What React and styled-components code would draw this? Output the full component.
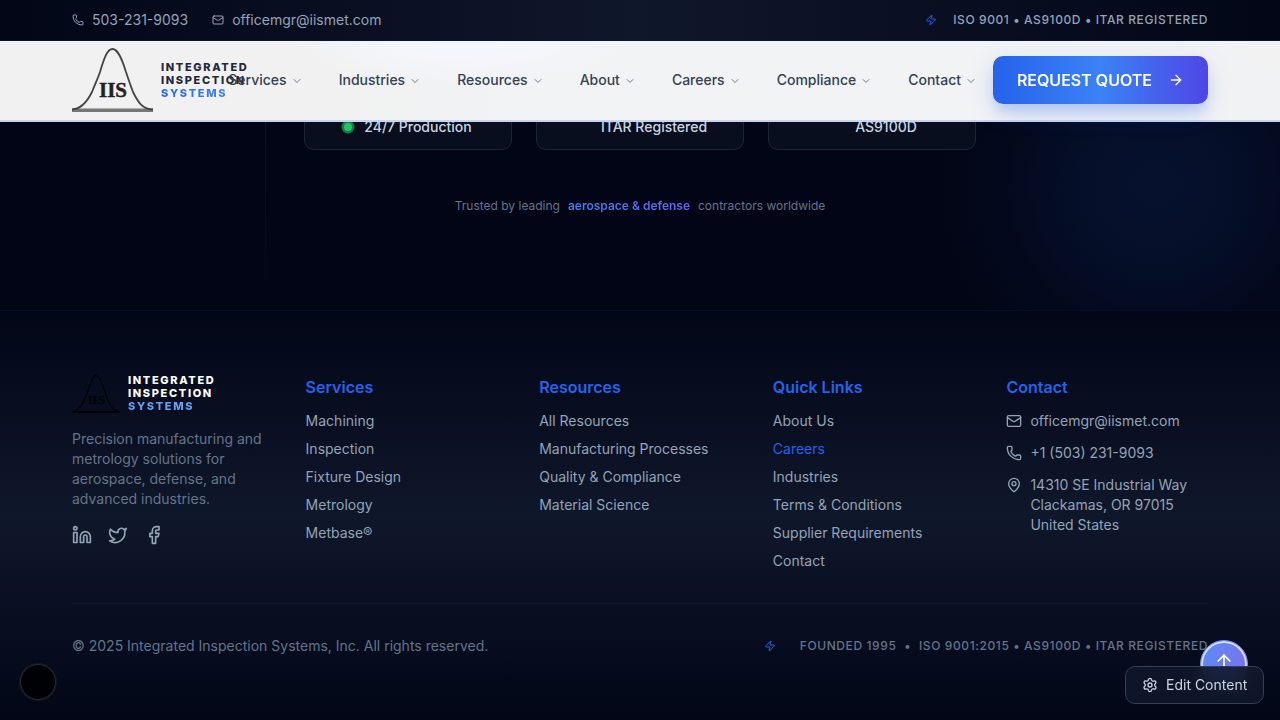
import React from "react";
import styled, { createGlobalStyle } from "styled-components";
import {
  Phone, Mail, Zap, ChevronDown, ArrowRight, ArrowUp,
  Linkedin, Twitter, Facebook, MapPin, Settings,
} from "lucide-react";

const GlobalStyle = createGlobalStyle`
  *, *::before, *::after { box-sizing: border-box; }
  body {
    margin: 0;
    background: #020515;
    font-family: Inter, "Liberation Sans", sans-serif;
    font-size: 14px;
    line-height: 20px;
    overflow: hidden;
  }
  svg { flex: none; display: block; }
`;

const Page = styled.div`
  position: relative;
  width: 1280px;
  height: 720px;
  overflow: hidden;
  background: #020515;
`;

const Container = styled.div`
  width: 1136px;
  margin: 0 auto;
`;

/* Sticky header */
const Header = styled.header`
  position: fixed;
  top: 0;
  left: 0;
  width: 1280px;
  z-index: 10;
`;

const TopBar = styled.div`
  height: 41px;
  border-bottom: 1px solid #071634;
  background: linear-gradient(90deg, #020617, #0f172a 50%, #020617);
`;

const TopRow = styled(Container)`
  display: flex;
  height: 40px;
  align-items: center;
  justify-content: space-between;
  color: #94a3b8;
`;

const Inline = styled.div`
  display: flex;
  align-items: center;
  gap: ${(p) => p.$gap}px;
`;

const Caps = styled.span`
  font-size: 12px;
  font-weight: ${(p) => p.$weight || 500};
  letter-spacing: 0.05em;
  line-height: 16px;
  white-space: nowrap;
`;

const NavBar = styled.div`
  height: 81px;
  border-bottom: 2px solid #c8d5f0;
  background:
    radial-gradient(ellipse 170px 44px at 465px 0, #f4f8ff, rgba(244, 247, 253, 0.6) 55%, rgba(244, 247, 253, 0)),
    radial-gradient(ellipse 240px 90px at 1150px 80px, #f1f3f6, rgba(241, 243, 246, 0)),
    linear-gradient(90deg, #f1f1f1 0 25%, #f1f3f4 40% 85%, #f2f2f2);
`;

const NavRow = styled(Container)`
  display: flex;
  height: 78px;
  align-items: center;
`;

const Brand = styled.div`
  display: flex;
  flex: 1 1 0;
  min-width: 0;
  align-items: center;
  gap: 8px;
`;

const BrandText = styled.div`
  font-size: 11px;
  font-weight: 800;
  line-height: 13px;
  letter-spacing: 0.15em;
  white-space: nowrap;
  color: ${(p) => (p.$light ? "#ffffff" : "#1e293b")};
  margin-top: ${(p) => (p.$light ? -2 : 1)}px;
`;

const BrandAccent = styled.span`
  display: table;
  color: transparent;
  background: ${(p) => (p.$light ? "linear-gradient(90deg, #60a5fa, #60a5fa)" : "linear-gradient(90deg, #2563eb, #3b82f6)")};
  background-clip: text;
`;

const Nav = styled.nav`
  display: flex;
  gap: 4px;
`;

const NavItem = styled.a`
  display: flex;
  align-items: center;
  gap: 4px;
  padding: 8px 16px;
  font-weight: 500;
  color: #334155;
  svg { color: #6f7b8e; margin-top: 2px; }
`;

const QuoteButton = styled.button`
  display: flex;
  align-items: center;
  justify-content: space-between;
  flex: none;
  width: 215px;
  height: 48px;
  padding: 0 24px;
  border: 0;
  border-radius: 10px;
  color: #fff;
  font: 500 16px/24px Inter, sans-serif;
  -webkit-text-stroke: 0.2px #fff;
  background: linear-gradient(90deg, #2563eb, #3b82f6 50%, #4f46e5);
  box-shadow: 0 10px 15px -3px rgba(37, 99, 235, 0.27), 0 8px 28px rgba(37, 99, 235, 0.13);
`;

/* Hero tail */
const Hero = styled.section`
  position: relative;
  display: flex;
  flex-direction: column;
  align-items: center;
  height: 310px;
  padding-top: 104px;
  background: radial-gradient(
    circle 220px at 1155px 185px,
    rgba(30, 100, 215, 0.13),
    rgba(30, 100, 215, 0.1) 35%,
    rgba(30, 100, 215, 0.04) 70%,
    rgba(30, 100, 215, 0)
  );
`;

const GridLine = styled.span`
  position: absolute;
  left: 265px;
  top: 0;
  width: 1px;
  height: 300px;
  background: linear-gradient(#07152f 40%, transparent);
`;

const Badges = styled.div`
  display: grid;
  grid-template-columns: repeat(3, 208px);
  gap: 24px;
`;

const Badge = styled.div`
  display: flex;
  align-items: center;
  justify-content: center;
  gap: 12px;
  height: 46px;
  border: 1px solid #1c2535;
  border-radius: 10px;
  background: #080e1e;
  color: #cbd5e1;
  font-weight: 500;
`;

const BadgeMark = styled.span`
  width: ${(p) => (p.$live ? 8 : 16)}px;
  height: 8px;
  border-radius: 50%;
  background: ${(p) => (p.$live ? "#22c55e" : "transparent")};
  box-shadow: ${(p) => (p.$live ? "0 0 0 2.5px rgba(34, 197, 94, 0.6)" : "none")};
`;

const Trust = styled.p`
  display: flex;
  gap: 8px;
  margin: 48px 0 0;
  font-size: 12px;
  line-height: 16px;
  color: #64748b;
`;

const TrustAccent = styled.strong`
  font-weight: 600;
  color: transparent;
  background: linear-gradient(90deg, #3b82f6, #6366f1);
  background-clip: text;
`;

/* Footer */
const Footer = styled.footer`
  height: 410px;
  padding-top: 64px;
  border-top: 1px solid #040e2c;
  background: linear-gradient(#020617, #0f172a 50%, #020617);
  color: #94a3b8;
`;

const Columns = styled.div`
  display: grid;
  grid-template-columns: repeat(5, 1fr);
  gap: 32px;
  height: 196px;
`;

const About = styled.p`
  margin: 16px 0;
  color: #64748b;
  white-space: nowrap;
`;

const FooterBrand = styled.div`
  display: flex;
  align-items: center;
  gap: 8px;
  height: 38px;
`;

const Heading = styled.h3`
  margin: 0 0 12px;
  font-size: 16px;
  line-height: 24px;
  font-weight: 600;
  color: #2563eb;
`;

const List = styled.ul`
  display: flex;
  flex-direction: column;
  gap: ${(p) => p.$gap || 8}px;
  margin: 0;
  padding: 0;
  list-style: none;
  white-space: nowrap;
`;

const Item = styled.li`
  color: ${(p) => (p.$active ? "#2563eb" : "#94a3b8")};
`;

const ContactItem = styled.li`
  display: flex;
  gap: 8px;
  svg { margin-top: 2px; }
`;

const Legal = styled.div`
  display: flex;
  align-items: center;
  justify-content: space-between;
  margin-top: 32px;
  padding-top: 32px;
  border-top: 1px solid #0f1730;
  color: #64748b;
`;

/* Floating controls */
const ScrollTop = styled.button`
  position: fixed;
  left: 1200px;
  top: 640px;
  display: flex;
  align-items: center;
  justify-content: center;
  width: 48px;
  height: 48px;
  padding: 0 0 6px;
  border: 1px solid #6f93f3;
  border-radius: 50%;
  color: #fff;
  background: linear-gradient(100deg, #5b8bf3, #7b72ed);
  box-shadow: inset 0 0 0 2px #d3dcfb;
`;

const EditButton = styled.button`
  position: fixed;
  left: 1125px;
  top: 666px;
  display: flex;
  align-items: center;
  gap: 8px;
  width: 139px;
  height: 38px;
  padding: 0 16px;
  border: 1px solid #334155;
  border-radius: 10px;
  color: #cbd5e1;
  font: 400 14px/20px Inter, sans-serif;
  white-space: nowrap;
  background: rgba(15, 23, 42, 0.9);
  backdrop-filter: blur(8px);
`;

const RoundBadge = styled.div`
  position: fixed;
  left: 20px;
  top: 664px;
  width: 36px;
  height: 36px;
  border: 1px solid #27282c;
  border-radius: 50%;
  background: #000104;
  box-shadow: 0 0 0 1px #16181e;
`;

function BellLogo({ width, height, dark }) {
  const ink = dark ? "#010206" : "#222";
  return (
    <svg width={width} height={height} viewBox="0 0 81 64" preserveAspectRatio="none">
      <rect x="0" y="60.5" width="81" height="3.5" fill={dark ? "#010206" : "#777"} />
      <path
        d="M0 61.5 C10 61 16 52 20 44 C24 34 26 30 28 24 C32 11 35 1 40.5 1 C46 1 50 11 54 24 C56 30 58 36 61 44 C66 54 70 61 81 61.5"
        fill="none"
        stroke={dark ? "#010206" : "#444"}
        strokeWidth="1.8"
      />
      <text
        x="27"
        y="49.3"
        textLength="28"
        lengthAdjust="spacingAndGlyphs"
        fontFamily="Liberation Serif, serif"
        fontWeight="700"
        fontSize="21"
        fill={ink}
        stroke={ink}
        strokeWidth="0.4"
      >
        IIS
      </text>
    </svg>
  );
}

function BrandName({ light }) {
  return (
    <BrandText $light={light}>
      INTEGRATED<br />INSPECTION<br />
      <BrandAccent $light={light}>SYSTEMS</BrandAccent>
    </BrandText>
  );
}

function LinkColumn({ title, links, active }) {
  return (
    <div>
      <Heading>{title}</Heading>
      <List>
        {links.map((l) => <Item key={l} $active={l === active}>{l}</Item>)}
      </List>
    </div>
  );
}

const NAV = ["Services", "Industries", "Resources", "About", "Careers", "Compliance", "Contact"];

export default function App() {
  return (
    <Page>
      <GlobalStyle />
      <Header>
        <TopBar>
          <TopRow>
            <Inline $gap={24}>
              <Inline $gap={8}><Phone size={12} />503-231-9093</Inline>
              <Inline $gap={8}><Mail size={12} />officemgr@iismet.com</Inline>
            </Inline>
            <Inline $gap={16}>
              <Zap size={12} color="#2563eb" />
              <Caps>ISO 9001 • AS9100D • ITAR REGISTERED</Caps>
            </Inline>
          </TopRow>
        </TopBar>
        <NavBar>
          <NavRow>
            <Brand>
              <BellLogo width={81} height={64} />
              <BrandName />
            </Brand>
            <Nav>
              {NAV.map((n) => <NavItem key={n}>{n}<ChevronDown size={12} /></NavItem>)}
            </Nav>
            <QuoteButton>REQUEST QUOTE<ArrowRight size={16} /></QuoteButton>
          </NavRow>
        </NavBar>
      </Header>

      <Hero>
        <GridLine />
        <Badges>
          <Badge><BadgeMark $live />24/7 Production</Badge>
          <Badge><BadgeMark />ITAR Registered</Badge>
          <Badge><BadgeMark />AS9100D</Badge>
        </Badges>
        <Trust>
          <span>Trusted by leading</span>
          <TrustAccent>aerospace &amp; defense</TrustAccent>
          <span>contractors worldwide</span>
        </Trust>
      </Hero>

      <Footer>
        <Container>
          <Columns>
            <div>
              <FooterBrand>
                <BellLogo width={48} height={38} dark />
                <BrandName light />
              </FooterBrand>
              <About>
                Precision manufacturing and<br />metrology solutions for<br />
                aerospace, defense, and<br />advanced industries.
              </About>
              <Inline $gap={16}>
                <Linkedin size={20} /><Twitter size={20} /><Facebook size={20} />
              </Inline>
            </div>
            <LinkColumn title="Services" links={["Machining", "Inspection", "Fixture Design", "Metrology", "Metbase®"]} />
            <LinkColumn title="Resources" links={["All Resources", "Manufacturing Processes", "Quality & Compliance", "Material Science"]} />
            <LinkColumn
              title="Quick Links"
              active="Careers"
              links={["About Us", "Careers", "Industries", "Terms & Conditions", "Supplier Requirements", "Contact"]}
            />
            <div>
              <Heading>Contact</Heading>
              <List $gap={12}>
                <ContactItem><Mail size={16} />officemgr@iismet.com</ContactItem>
                <ContactItem><Phone size={16} />+1 (503) 231-9093</ContactItem>
                <ContactItem>
                  <MapPin size={16} />
                  <span>14310 SE Industrial Way<br />Clackamas, OR 97015<br />United States</span>
                </ContactItem>
              </List>
            </div>
          </Columns>
          <Legal>
            <span>© 2025 Integrated Inspection Systems, Inc. All rights reserved.</span>
            <Inline $gap={24}>
              <Zap size={12} color="#2563eb" />
              <Inline $gap={7.6}>
                <Caps>FOUNDED 1995</Caps>
                <Caps $weight={400}>•</Caps>
                <Caps>ISO 9001:2015 • AS9100D • ITAR REGISTERED</Caps>
              </Inline>
            </Inline>
          </Legal>
        </Container>
      </Footer>

      <RoundBadge />
      <ScrollTop><ArrowUp size={20} /></ScrollTop>
      <EditButton><Settings size={16} />Edit Content</EditButton>
    </Page>
  );
}
